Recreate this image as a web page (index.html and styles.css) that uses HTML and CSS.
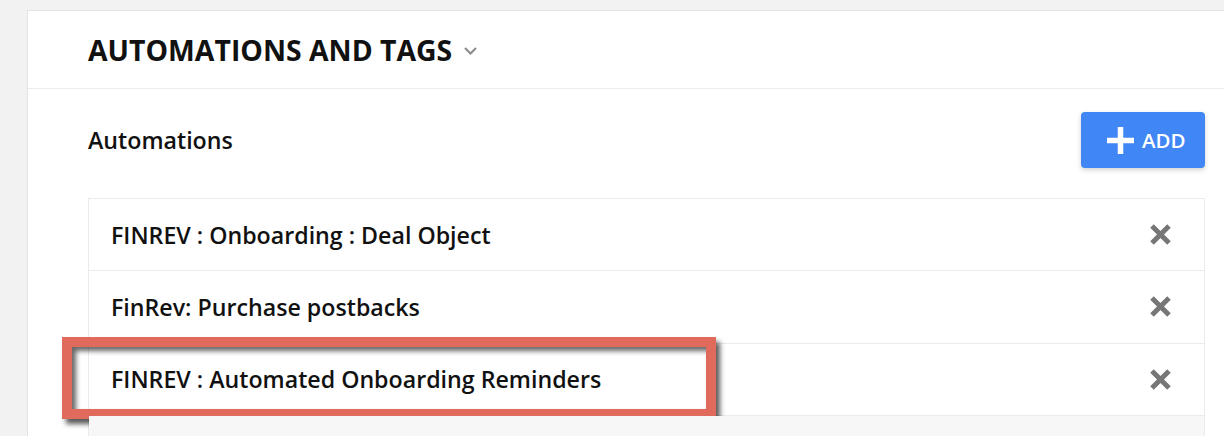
FILE: index.html
```html
<!DOCTYPE html>
<html>
<head>
<meta charset="utf-8">
<link rel="stylesheet" href="styles.css">
</head>
<body>
<div class="card">
  <div class="card-header">
    <h1 class="title">AUTOMATIONS AND TAGS</h1>
    <svg class="chevron" width="13" height="8" viewBox="0 0 13 8"><path d="M1 1 L6.5 6.5 L12 1" fill="none" stroke="#8a8a8a" stroke-width="2"/></svg>
  </div>
  <div class="card-body">
    <div class="section-head">
      <h2 class="section-title">Automations</h2>
      <button class="add-btn">
        <svg class="plus" width="27" height="27" viewBox="0 0 27 27"><path d="M13.5 0 V27 M0 13.5 H27" stroke="#fff" stroke-width="5.5"/></svg>
        <span>ADD</span>
      </button>
    </div>
    <ul class="list">
      <li class="row"><span class="row-text">FINREV : Onboarding : Deal Object</span><svg class="x" width="23" height="23" viewBox="0 0 23 23"><path d="M3 3 L20 20 M20 3 L3 20" stroke="#767676" stroke-width="5"/></svg></li>
      <li class="row"><span class="row-text">FinRev: Purchase postbacks</span><svg class="x" width="23" height="23" viewBox="0 0 23 23"><path d="M3 3 L20 20 M20 3 L3 20" stroke="#767676" stroke-width="5"/></svg></li>
      <li class="row highlighted"><span class="row-text">FINREV : Automated Onboarding Reminders</span><svg class="x" width="23" height="23" viewBox="0 0 23 23"><path d="M3 3 L20 20 M20 3 L3 20" stroke="#767676" stroke-width="5"/></svg><span class="annot"></span></li>
      <li class="row row-muted"></li>
    </ul>
  </div>
</div>
</body>
</html>
```
FILE: styles.css
```css
html, body {
  margin: 0;
  padding: 0;
  background: #f2f2f2;
  overflow: hidden;
  height: 436px;
}
body {
  font-family: "Open Sans", "Liberation Sans", sans-serif;
  color: #111;
}
.card {
  margin: 10px 0 0 27px;
  background: #fff;
  border-top: 1px solid #e2e2e2;
  border-left: 1px solid #e2e2e2;
}
.card-header {
  height: 77px;
  border-bottom: 1px solid #ececec;
  display: flex;
  align-items: center;
  padding-left: 60px;
}
.title {
  margin: 0;
  font-size: 28.4px;
  font-weight: 700;
  color: #111;
}
.chevron {
  margin-left: 12px;
  margin-top: 2px;
}
.card-body {
  padding: 23px 19px 0 60px;
}
.section-head {
  display: flex;
  align-items: center;
  justify-content: space-between;
  height: 56px;
  margin-bottom: 30px;
}
.section-title {
  margin: 0;
  font-size: 23.2px;
  font-weight: 600;
  color: #111;
}
.add-btn {
  display: flex;
  align-items: center;
  gap: 8px;
  width: 124px;
  height: 56px;
  padding: 0 0 0 26px;
  border: none;
  border-radius: 4px;
  background: #4186f5;
  color: #fff;
  font-family: "Open Sans", "Liberation Sans", sans-serif;
  font-size: 20.5px;
  font-weight: 600;
  box-shadow: 0 2px 5px rgba(0,0,0,0.18);
}
.list {
  list-style: none;
  margin: 0;
  padding: 0;
  border: 1px solid #ebebeb;
  border-bottom: none;
}
.row {
  position: relative;
  height: 71.3px;
  border-bottom: 1px solid #ebebeb;
  display: flex;
  align-items: center;
  justify-content: space-between;
  padding: 0 32px 0 22px;
}
.row-text {
  font-size: 23.2px;
  font-weight: 600;
  color: #111;
}
.row-muted {
  background: #f7f7f7;
}
.annot {
  position: absolute;
  left: -27px;
  top: -7px;
  width: 634px;
  height: 62px;
  border: 10px solid #e06b5d;
  box-shadow: 4px 5px 5px rgba(0,0,0,0.65), inset 4px 4px 5px rgba(0,0,0,0.6);
}
```
